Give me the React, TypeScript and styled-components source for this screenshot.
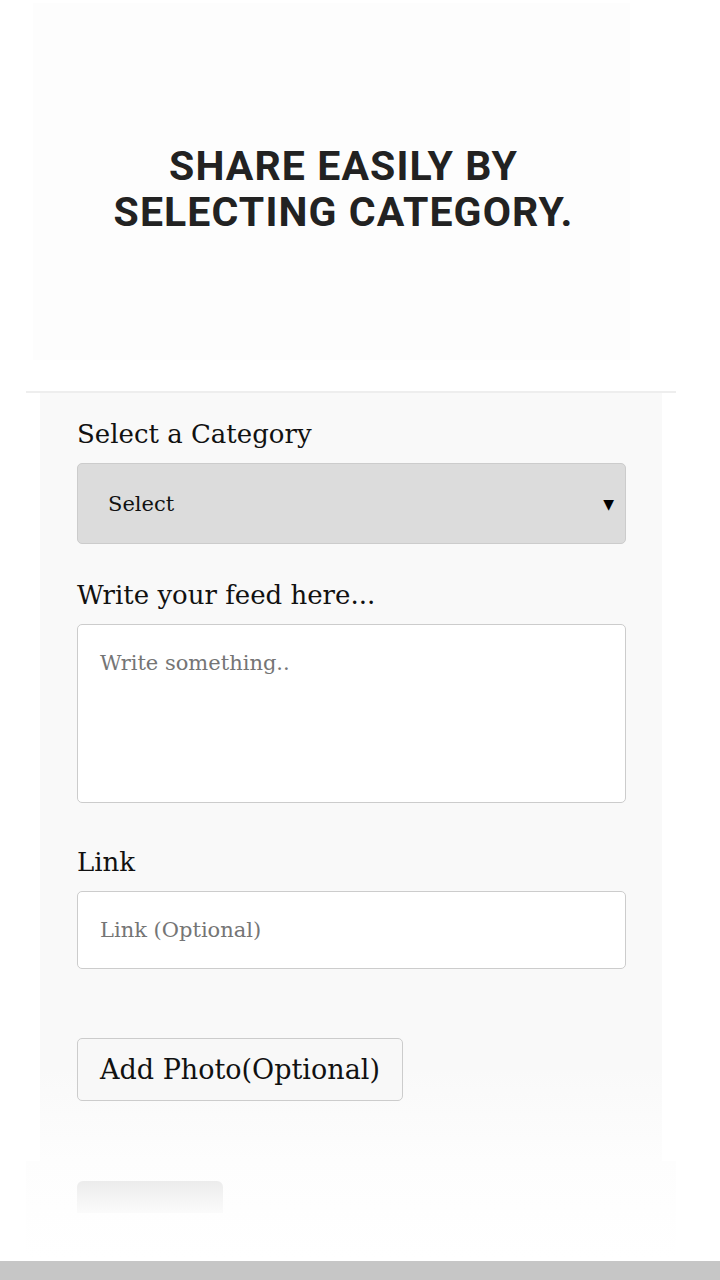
import styled, { createGlobalStyle } from 'styled-components'

const GlobalStyle = createGlobalStyle`
    html, body {
        margin: 0;
        padding: 0;
        background: #ffffff;
    }
    * {
        box-sizing: border-box;
    }
`

const Page = styled.div`
    min-height: 100vh;
    display: flex;
    flex-direction: column;
    background: #ffffff;
`

const Wrapper = styled.div`
    width: 650px;
    margin-left: 26px;
    flex: 1;
`

const Hero = styled.div`
    height: 393px;
    padding: 3px 46px 31px 7px;
    border-bottom: 2px solid #eeeeee;
`

const HeroCard = styled.div`
    height: 100%;
    background: #fdfdfd;
    display: flex;
    align-items: center;
    justify-content: center;
    padding: 14px 0 0 24px;
`

const HeroTitle = styled.h1`
    margin: 0;
    font-family: Roboto, "Liberation Sans", sans-serif;
    font-weight: 700;
    font-size: 41px;
    line-height: 46px;
    letter-spacing: 1.1px;
    color: #222222;
    text-align: center;
    text-transform: uppercase;
`

const FormPanel = styled.div`
    margin: 0 14px;
    padding: 24px 36px 60px 37px;
    background: linear-gradient(to bottom, #f9f9f9 0%, #f9f9f9 88%, #fdfdfd 100%);
`

const Field = styled.div<{ gap: number }>`
    margin-top: ${p => p.gap}px;
`

const Label = styled.label`
    display: block;
    font-family: "DejaVu Serif", "Liberation Serif", serif;
    font-size: 26px;
    line-height: 34px;
    color: #111111;
    margin-bottom: 12px;
`

const SelectBox = styled.div`
    height: 81px;
    border: 1px solid #cccccc;
    border-radius: 5px;
    background: #dcdcdc;
    display: flex;
    align-items: center;
    justify-content: space-between;
    padding: 0 10px 0 30px;
    font-family: "DejaVu Serif", "Liberation Serif", serif;
    font-size: 21px;
    color: #111111;
`

const Arrow = styled.span`
    font-family: "DejaVu Sans", sans-serif;
    font-size: 14px;
    color: #000000;
    margin-right: 1px;
`

const TextArea = styled.textarea`
    display: block;
    width: 100%;
    height: 179px;
    border: 1px solid #cccccc;
    border-radius: 5px;
    background: #ffffff;
    padding: 22px 22px;
    resize: none;
    font-family: "DejaVu Serif", "Liberation Serif", serif;
    font-size: 21px;
    line-height: 32px;
    color: #111111;
    ::placeholder {
        color: #767676;
    }
`

const TextInput = styled.input`
    display: block;
    width: 100%;
    height: 78px;
    border: 1px solid #cccccc;
    border-radius: 5px;
    background: #ffffff;
    padding: 0 22px;
    font-family: "DejaVu Serif", "Liberation Serif", serif;
    font-size: 21px;
    color: #111111;
    ::placeholder {
        color: #767676;
    }
`

const PhotoButton = styled.button`
    display: block;
    height: 63px;
    padding: 0 22px;
    border: 1px solid #cccccc;
    border-radius: 5px;
    background: #f8f8f8;
    font-family: "DejaVu Serif", "Liberation Serif", serif;
    font-size: 27px;
    color: #111111;
`

const FadeArea = styled.div`
    height: 98px;
    padding: 20px 0 0 51px;
    background: linear-gradient(to bottom, #fdfdfd, #ffffff);
`

const GhostButton = styled.div`
    width: 146px;
    height: 32px;
    border-radius: 6px 6px 0 0;
    background: linear-gradient(to bottom, #ececec, #fbfbfb);
`

const BottomBar = styled.div`
    height: 19px;
    background: #c6c6c6;
`

const App = () => {
    return (
        <Page>
            <GlobalStyle />
            <Wrapper>
                <Hero>
                    <HeroCard>
                        <HeroTitle>Share easily by<br />selecting category.</HeroTitle>
                    </HeroCard>
                </Hero>
                <FormPanel>
                    <Field gap={0}>
                        <Label>Select a Category</Label>
                        <SelectBox>
                            <span>Select</span>
                            <Arrow>▼</Arrow>
                        </SelectBox>
                    </Field>
                    <Field gap={34}>
                        <Label>Write your feed here...</Label>
                        <TextArea placeholder="Write something.." />
                    </Field>
                    <Field gap={42}>
                        <Label>Link</Label>
                        <TextInput placeholder="Link (Optional)" />
                    </Field>
                    <Field gap={69}>
                        <PhotoButton>Add Photo(Optional)</PhotoButton>
                    </Field>
                </FormPanel>
                <FadeArea>
                    <GhostButton />
                </FadeArea>
            </Wrapper>
            <BottomBar />
        </Page>
    )
}

export default App
